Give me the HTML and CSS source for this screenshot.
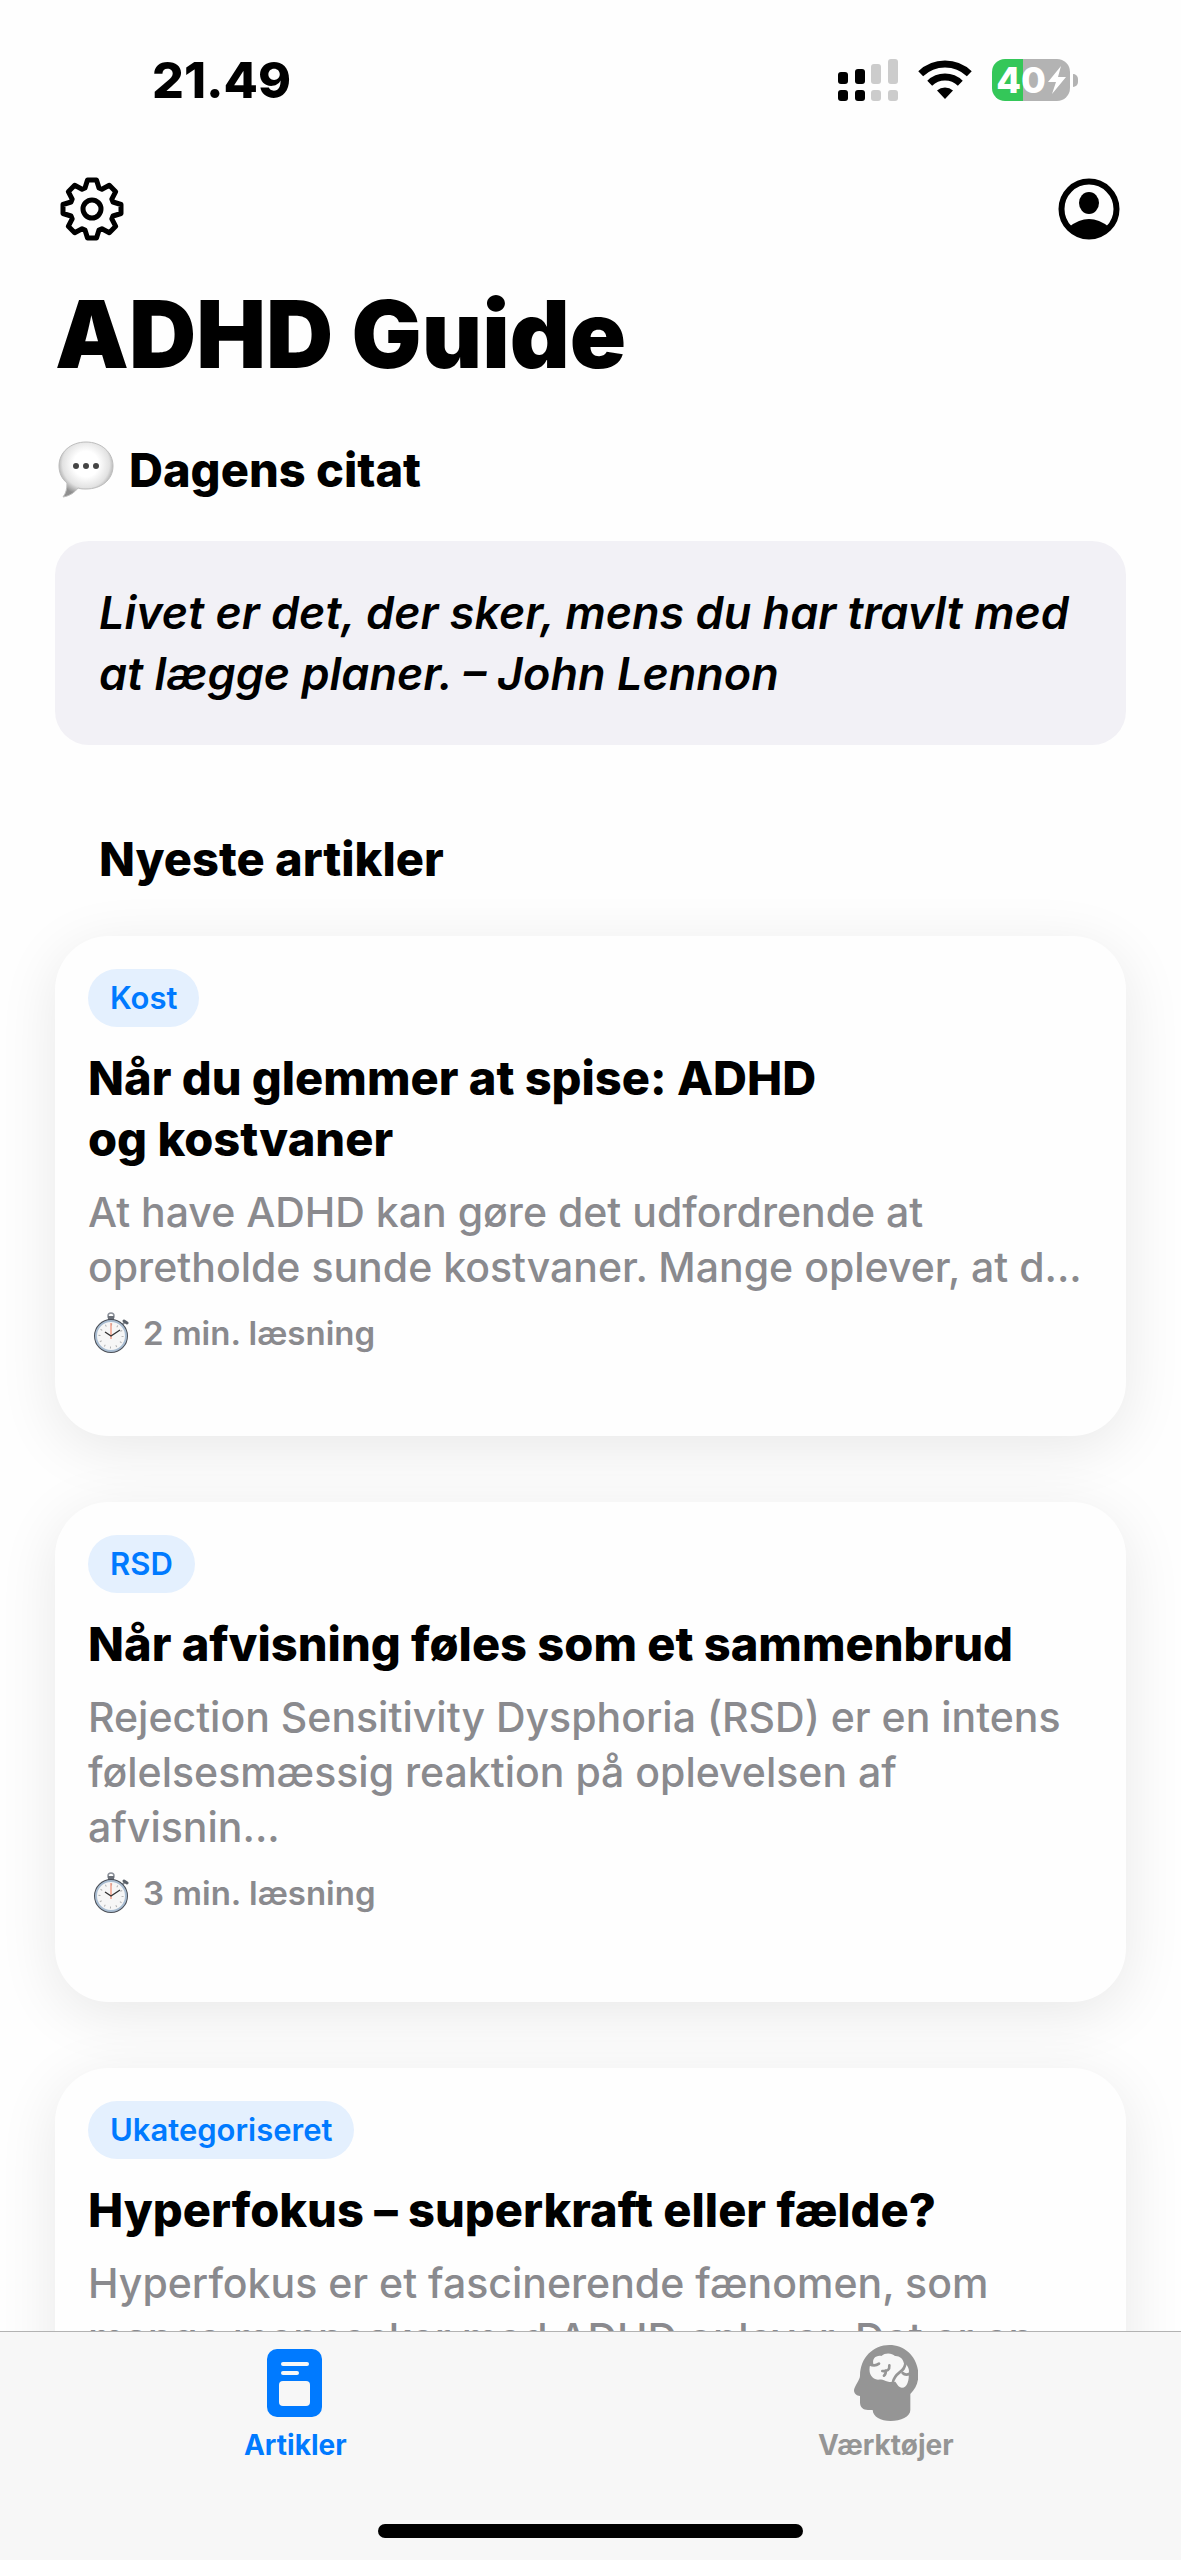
FILE: index.html
```html
<!DOCTYPE html>
<html lang="da">

<head>
    <meta charset="UTF-8">
    <meta name="viewport" content="width=device-width, initial-scale=1.0">
    <title>ADHD Guide</title>
    <link rel="stylesheet" href="styles.css">
</head>

<body>
    <!-- Shared stopwatch symbol -->
    <svg class="symbols" aria-hidden="true">
        <symbol id="stopwatch" viewBox="0 0 36 42">
            <circle cx="18" cy="4" r="3" fill="none" stroke="#8b9099" stroke-width="1.5" />
            <rect x="15" y="4" width="6" height="5" fill="#6b7078" />
            <path d="M29 13l3-3" stroke="#8b9099" stroke-width="2" />
            <path d="M31 9l3 2" stroke="#5a6068" stroke-width="3" stroke-linecap="round" />
            <circle cx="18" cy="24" r="16" fill="#f6f6f6" stroke="#4b4f57" stroke-width="2" />
            <circle cx="18" cy="24" r="15" fill="none" stroke="#a9bdd2" stroke-width="2" />
            <circle cx="18" cy="24" r="11.5" fill="none" stroke="#b0b0b0" stroke-width="2" stroke-dasharray="1 5" />
            <path d="M18 27V11" stroke="#f08a70" stroke-width="1.2" />
            <path d="M12 20l6 4 9-6" fill="none" stroke="#333" stroke-width="1.4" />
        </symbol>
    </svg>

    <div class="screen">
        <div class="status-bar">
            <span class="time">21.49</span>
            <div class="status-icons">
                <svg class="signal" viewBox="0 0 60 42" aria-hidden="true">
                    <g fill="#000">
                        <rect x="0" y="13" width="10" height="12" rx="3" />
                        <rect x="0" y="31" width="10" height="11" rx="3" />
                        <rect x="17" y="10" width="10" height="15" rx="3" />
                        <rect x="17" y="31" width="10" height="11" rx="3" />
                    </g>
                    <g fill="#ccc">
                        <rect x="33" y="5" width="10" height="20" rx="3" />
                        <rect x="33" y="31" width="10" height="11" rx="3" />
                        <rect x="50" y="0" width="10" height="25" rx="3" />
                        <rect x="50" y="31" width="10" height="11" rx="3" />
                    </g>
                </svg>
                <svg class="wifi" viewBox="0 0 54 40" aria-hidden="true">
                    <g fill="none" stroke="#000" stroke-width="7">
                        <path d="M2.7 13.8a35 35 0 0 1 48.6 0" />
                        <path d="M11.7 23.2a22 22 0 0 1 30.6 0" />
                    </g>
                    <path d="M27 39l-8-8.4a12 12 0 0 1 16 0z" />
                </svg>
                <div class="battery">
                    <div class="battery-body">
                        <span>40</span>
                        <svg viewBox="0 0 18 28" aria-hidden="true"><path d="M13 0L0 16h8L4 28 18 11h-8z" fill="#fff" /></svg>
                    </div>
                    <div class="battery-cap"></div>
                </div>
            </div>
        </div>

        <header>
            <button class="icon-btn" aria-label="Indstillinger">
                <svg viewBox="-32 -32 64 64" fill="none" stroke="#000" stroke-width="5" stroke-linejoin="round">
                    <path d="M-7-21L-4.5-29H4.5L7-21 9.9-19.8 17.3-23.7 23.7-17.3 19.8-9.9 21-7 29-4.5V4.5L21 7 19.8 9.9 23.7 17.3 17.3 23.7 9.9 19.8 7 21 4.5 29H-4.5L-7 21-9.9 19.8-17.3 23.7-23.7 17.3-19.8 9.9-21 7-29 4.5V-4.5L-21-7-19.8-9.9-23.7-17.3-17.3-23.7-9.9-19.8z" />
                    <circle r="9" />
                </svg>
            </button>
            <button class="icon-btn" aria-label="Profil">
                <svg viewBox="0 0 64 64">
                    <circle cx="32" cy="32" r="27.5" fill="none" stroke="#000" stroke-width="6" />
                    <ellipse cx="32" cy="26" rx="10" ry="11" />
                    <path d="M12 50Q32 34 52 50A28 28 0 0 1 12 50z" />
                </svg>
            </button>
        </header>

        <main>
            <h1>ADHD Guide</h1>

            <h2 class="quote-title">
                <svg viewBox="0 0 56 58" aria-hidden="true">
                    <defs>
                        <radialGradient id="bubble" cx="50%" cy="40%" r="58%">
                            <stop offset="0.4" stop-color="#fff" />
                            <stop offset="0.75" stop-color="#e2e2e2" />
                            <stop offset="1" stop-color="#8f8f8f" />
                        </radialGradient>
                    </defs>
                    <path d="M28 1c15 0 27 10 27 24S43 48 28 48c-3 0-5 0-8-1-3 4-8 8-15 9 3-4 4-8 4-14C4 38 1 32 1 25 1 11 13 1 28 1z" fill="url(#bubble)" stroke="#bdbdbd" stroke-width="1" />
                    <g fill="#444">
                        <circle cx="18" cy="25" r="3" />
                        <circle cx="28" cy="25" r="3" />
                        <circle cx="38" cy="25" r="3" />
                    </g>
                </svg>
                Dagens citat
            </h2>
            <blockquote class="quote">Livet er det, der sker, mens du har travlt med at lægge planer. – John Lennon</blockquote>

            <h2 class="section-title">Nyeste artikler</h2>

            <div class="articles">
                <article class="card">
                    <span class="tag">Kost</span>
                    <h3>Når du glemmer at spise: ADHD<br>og kostvaner</h3>
                    <p>At have ADHD kan gøre det udfordrende at<br>opretholde sunde kostvaner. Mange oplever, at d...</p>
                    <div class="meta"><svg aria-hidden="true"><use href="#stopwatch" /></svg>2 min. læsning</div>
                </article>
                <article class="card">
                    <span class="tag">RSD</span>
                    <h3>Når afvisning føles som et sammenbrud</h3>
                    <p>Rejection Sensitivity Dysphoria (RSD) er en intens<br>følelsesmæssig reaktion på oplevelsen af<br>afvisnin...</p>
                    <div class="meta"><svg aria-hidden="true"><use href="#stopwatch" /></svg>3 min. læsning</div>
                </article>
                <article class="card">
                    <span class="tag">Ukategoriseret</span>
                    <h3>Hyperfokus – superkraft eller fælde?</h3>
                    <p>Hyperfokus er et fascinerende fænomen, som<br>mange mennesker med ADHD oplever. Det er en</p>
                </article>
            </div>
        </main>

        <nav>
            <div class="tabs">
                <a href="#artikler" class="tab active">
                    <svg viewBox="0 0 64 76" aria-hidden="true">
                        <rect x="4" y="4" width="55" height="68" rx="10" fill="#007aff" />
                        <g fill="#f7f7f7">
                            <rect x="18" y="17" width="28" height="4" rx="2" />
                            <rect x="18" y="26" width="18" height="4" rx="2" />
                            <rect x="16" y="36" width="31" height="25" rx="4" />
                        </g>
                    </svg>
                    Artikler
                </a>
                <a href="#vaerktoejer" class="tab">
                    <svg viewBox="0 0 192 228" aria-hidden="true">
                        <path d="M106 0C154 0 193 38 193 90C193 115 184 132 169 147V195C169 215 140 228 110 228C80 228 57 215 56 195H42C28 195 18 188 18 172V153C8 153 0 146 0 136C0 125 18 105 18 92C18 38 58 0 106 0Z" fill="#959595" />
                        <path d="M58 56C54 42 66 30 82 33C94 22 114 24 123 33C136 32 148 42 149 53C160 58 168 72 164 86C166 104 160 128 144 128C134 127 130 118 124 110C114 112 100 112 90 106C84 102 80 104 72 104C54 102 44 88 47 66C48 60 50 57 58 56Z" fill="#f7f7f7" />
                        <g fill="none" stroke="#959595" stroke-width="8" stroke-linecap="round">
                            <path d="M46 57Q62 66 75 56" />
                            <path d="M85 78Q108 80 106 61" />
                            <path d="M95 77Q96 88 90 92" />
                            <path d="M154 54C154 84 122 78 116 114" />
                            <path d="M167 86Q154 92 146 84" />
                        </g>
                    </svg>
                    Værktøjer
                </a>
            </div>
            <div class="home-indicator"></div>
        </nav>
    </div>
</body>

</html>
```
FILE: styles.css
```css
/* Reset default margin and padding */
* {
    margin: 0;
    padding: 0;
    box-sizing: border-box;
}

body {
    font-family: Inter, "Liberation Sans", sans-serif;
    background-color: #fefefe;
    color: #000;
}

.symbols {
    display: none;
}

.screen {
    display: flex;
    flex-direction: column;
    height: 100vh;
}

/* Status bar */
.status-bar {
    display: flex;
    justify-content: space-between;
    align-items: center;
    height: 160px;
    padding: 0 103px 0 152px;
}

.time {
    font-size: 50px;
    font-weight: 800;
}

.status-icons {
    display: flex;
    align-items: center;
    gap: 20px;
}

.signal {
    width: 60px;
    height: 42px;
}

.wifi {
    width: 54px;
    height: 40px;
}

.battery {
    display: flex;
    align-items: center;
    gap: 3px;
}

.battery-body {
    display: flex;
    align-items: center;
    justify-content: center;
    gap: 2px;
    width: 78px;
    height: 42px;
    border-radius: 13px;
    background: linear-gradient(to right, #34c759 40%, #b3b3b3 40%);
    color: #fff;
    font-size: 36px;
    font-weight: 800;
}

.battery-body svg {
    width: 18px;
    height: 28px;
}

.battery-cap {
    width: 5px;
    height: 13px;
    border-radius: 0 5px 5px 0;
    background-color: #b3b3b3;
}

/* Header buttons */
header {
    display: flex;
    justify-content: space-between;
    padding: 17px 60px 0;
}

.icon-btn {
    width: 64px;
    height: 64px;
    border: none;
    background: none;
    cursor: pointer;
}

.icon-btn svg {
    display: block;
    width: 64px;
    height: 64px;
}

/* Main content */
main {
    flex: 1;
    min-height: 0;
    overflow: hidden;
    padding: 39px 55px 0;
}

h1 {
    font-size: 93px;
    font-weight: 900;
    line-height: 108px;
}

h2,
h3 {
    font-size: 47px;
    font-weight: 800;
    line-height: 61px;
}

.quote-title {
    display: flex;
    align-items: center;
    gap: 15px;
    margin-top: 51px;
    padding-left: 3px;
}

.quote-title svg {
    width: 56px;
    height: 58px;
}

.quote {
    margin-top: 41px;
    padding: 41px 44px;
    border-radius: 34px;
    background-color: #f2f1f6;
    font-size: 45px;
    font-style: italic;
    font-weight: 600;
    line-height: 61px;
}

.section-title {
    margin: 83px 0 47px;
    padding-left: 44px;
}

/* Article cards */
.articles {
    display: flex;
    flex-direction: column;
    gap: 66px;
}

.card {
    min-height: 500px;
    padding: 33px;
    border-radius: 54px;
    background-color: #fefefe;
    box-shadow: 0 12px 60px rgba(0, 0, 0, 0.09);
}

.tag {
    display: block;
    width: fit-content;
    padding: 0 22px;
    border-radius: 29px;
    background-color: #e4f0fe;
    color: #007aff;
    font-size: 31px;
    font-weight: 600;
    line-height: 58px;
}

.card h3 {
    margin-top: 20px;
}

.card p {
    margin-top: 16px;
    color: #8a8a8e;
    font-size: 41px;
    font-weight: 500;
    line-height: 55px;
}

.meta {
    display: flex;
    align-items: center;
    gap: 14px;
    margin-top: 16px;
    padding-left: 5px;
    color: #8a8a8e;
    font-size: 33px;
    font-weight: 600;
    line-height: 44px;
}

.meta svg {
    width: 36px;
    height: 42px;
}

/* Bottom tab bar */
nav {
    display: flex;
    flex-direction: column;
    justify-content: space-between;
    height: 229px;
    padding-bottom: 22px;
    border-top: 1px solid #b3b3b3;
    background-color: #f7f7f7;
}

.tabs {
    display: flex;
}

.tab {
    flex: 1;
    display: flex;
    flex-direction: column;
    align-items: center;
    gap: 6px;
    padding-top: 13px;
    color: #959595;
    font-size: 28px;
    font-weight: 700;
    line-height: 36px;
    text-decoration: none;
}

.tab.active {
    color: #007aff;
}

.tab svg {
    width: 64px;
    height: 76px;
}

.home-indicator {
    width: 36%;
    height: 14px;
    margin: 0 auto;
    border-radius: 7px;
    background-color: #000;
}
```
